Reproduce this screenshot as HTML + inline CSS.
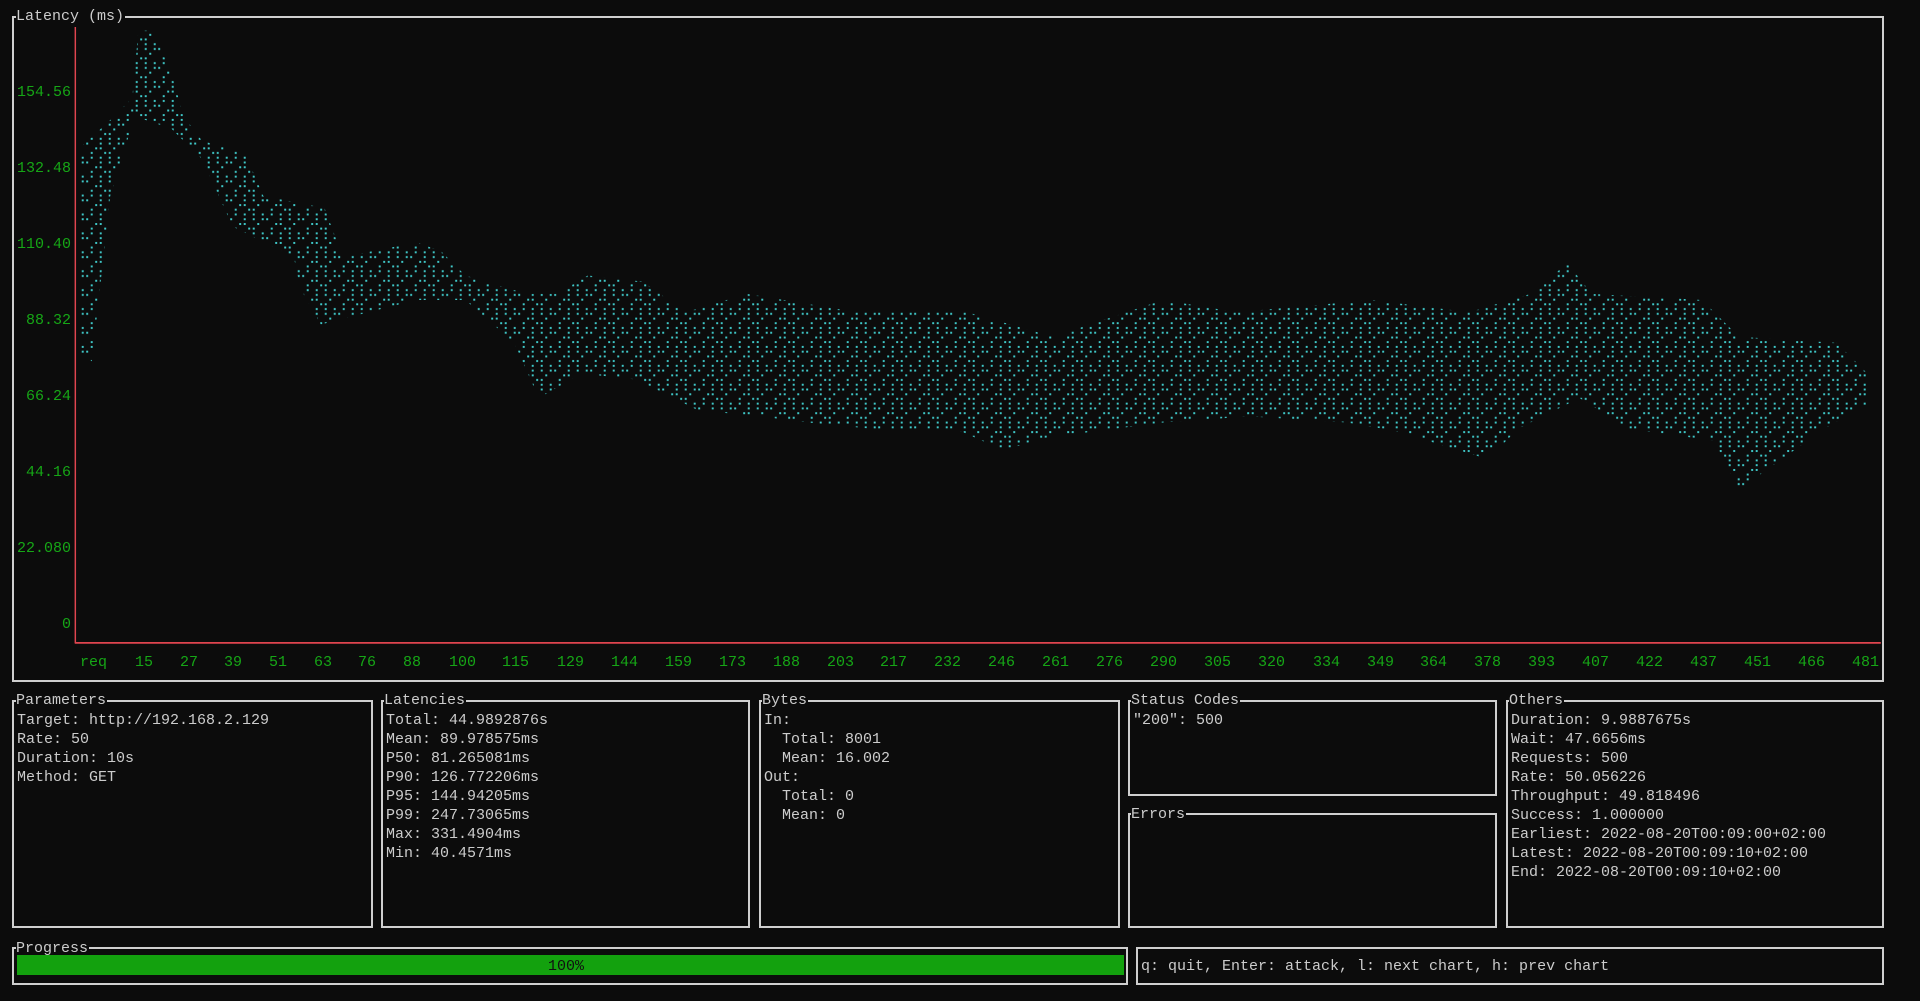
<!DOCTYPE html>
<html><head><meta charset="utf-8">
<style>
html,body{margin:0;padding:0;background:#0c0c0c;width:1920px;height:1001px;overflow:hidden}
body{position:relative;font-family:"Liberation Mono","DejaVu Sans Mono",monospace;font-size:15px;color:#cccccc}
.box{position:absolute;border:2px solid #cfcfcf;box-sizing:border-box}
.t{position:absolute;white-space:pre;line-height:19px;height:19px}
.ttl{background:#0c0c0c;padding:0 1px 0 0}
.g{color:#16a616}
</style></head><body>

<div class="box" style="left:12px;top:16px;width:1872px;height:666px"></div>
<div class="t ttl" style="left:16px;top:7px">Latency (ms)</div>

<svg style="position:absolute;left:0;top:0" width="1920" height="1001" viewBox="0 0 1568 817.5">
<defs>
<pattern id="p" patternUnits="userSpaceOnUse" width="29.4" height="15.45">
<g fill="#3fc9c9">
<rect x="0.6" y="0.5" width="1.6" height="1.6"/>
<rect x="0.6" y="4.4" width="1.6" height="1.6"/>
<rect x="0.6" y="8.3" width="1.6" height="1.6"/>
<rect x="4.3" y="12.2" width="1.6" height="1.6"/>
<rect x="7.95" y="4.4" width="1.6" height="1.6"/>
<rect x="7.95" y="8.3" width="1.6" height="1.6"/>
<rect x="11.6" y="8.3" width="1.6" height="1.6"/>
<rect x="15.3" y="0.5" width="1.6" height="1.6"/>
<rect x="15.3" y="4.4" width="1.6" height="1.6"/>
<rect x="18.95" y="12.2" width="1.6" height="1.6"/>
<rect x="22.65" y="4.4" width="1.6" height="1.6"/>
<rect x="22.65" y="8.3" width="1.6" height="1.6"/>
<rect x="22.65" y="12.2" width="1.6" height="1.6"/>
<rect x="26.3" y="0.5" width="1.6" height="1.6"/>
</g>
</pattern>
</defs>
<line x1="61.5" y1="22" x2="61.5" y2="525" stroke="#e0454f" stroke-width="1.2"/>
<line x1="61" y1="525" x2="1536" y2="525" stroke="#e0454f" stroke-width="1.4"/>
<polygon fill="url(#p)" points="66,120 88,100 108,80 113,25 125,25 140,60 150,95 165,115 200,125 215,160 240,165 265,170 280,210 340,198 360,205 380,225 430,240 455,240 480,225 525,230 560,255 610,240 700,255 790,255 860,275 950,245 1010,255 1120,245 1200,255 1250,240 1280,215 1300,240 1390,245 1420,275 1500,280 1525,305 1525,330 1490,350 1420,400 1400,360 1330,350 1290,325 1240,350 1215,375 1140,352 1100,345 1020,340 950,345 850,358 820,368 780,350 730,352 660,345 620,340 570,335 520,310 475,305 440,325 420,280 380,245 340,245 262,265 245,235 240,210 190,185 165,130 140,105 110,95 90,160 75,295 66,290"/>
</svg>

<div class="t g" style="right:1849px;top:83px">154.56</div>
<div class="t g" style="right:1849px;top:159px">132.48</div>
<div class="t g" style="right:1849px;top:235px">110.40</div>
<div class="t g" style="right:1849px;top:311px">88.32</div>
<div class="t g" style="right:1849px;top:387px">66.24</div>
<div class="t g" style="right:1849px;top:463px">44.16</div>
<div class="t g" style="right:1849px;top:539px">22.080</div>
<div class="t g" style="right:1849px;top:615px">0</div>

<div class="t g" style="left:80px;top:653px">req</div>
<div class="t g" style="left:135px;top:653px">15</div>
<div class="t g" style="left:180px;top:653px">27</div>
<div class="t g" style="left:224px;top:653px">39</div>
<div class="t g" style="left:269px;top:653px">51</div>
<div class="t g" style="left:314px;top:653px">63</div>
<div class="t g" style="left:358px;top:653px">76</div>
<div class="t g" style="left:403px;top:653px">88</div>
<div class="t g" style="left:449px;top:653px">100</div>
<div class="t g" style="left:502px;top:653px">115</div>
<div class="t g" style="left:557px;top:653px">129</div>
<div class="t g" style="left:611px;top:653px">144</div>
<div class="t g" style="left:665px;top:653px">159</div>
<div class="t g" style="left:719px;top:653px">173</div>
<div class="t g" style="left:773px;top:653px">188</div>
<div class="t g" style="left:827px;top:653px">203</div>
<div class="t g" style="left:880px;top:653px">217</div>
<div class="t g" style="left:934px;top:653px">232</div>
<div class="t g" style="left:988px;top:653px">246</div>
<div class="t g" style="left:1042px;top:653px">261</div>
<div class="t g" style="left:1096px;top:653px">276</div>
<div class="t g" style="left:1150px;top:653px">290</div>
<div class="t g" style="left:1204px;top:653px">305</div>
<div class="t g" style="left:1258px;top:653px">320</div>
<div class="t g" style="left:1313px;top:653px">334</div>
<div class="t g" style="left:1367px;top:653px">349</div>
<div class="t g" style="left:1420px;top:653px">364</div>
<div class="t g" style="left:1474px;top:653px">378</div>
<div class="t g" style="left:1528px;top:653px">393</div>
<div class="t g" style="left:1582px;top:653px">407</div>
<div class="t g" style="left:1636px;top:653px">422</div>
<div class="t g" style="left:1690px;top:653px">437</div>
<div class="t g" style="left:1744px;top:653px">451</div>
<div class="t g" style="left:1798px;top:653px">466</div>
<div class="t g" style="left:1852px;top:653px">481</div>

<div class="box" style="left:12px;top:700px;width:361px;height:228px"></div>
<div class="t ttl" style="left:16px;top:691px">Parameters</div>
<div class="t" style="left:17px;top:711px">Target: http://192.168.2.129
Rate: 50
Duration: 10s
Method: GET</div>

<div class="box" style="left:381px;top:700px;width:369px;height:228px"></div>
<div class="t ttl" style="left:384px;top:691px">Latencies</div>
<div class="t" style="left:386px;top:711px">Total: 44.9892876s
Mean: 89.978575ms
P50: 81.265081ms
P90: 126.772206ms
P95: 144.94205ms
P99: 247.73065ms
Max: 331.4904ms
Min: 40.4571ms</div>

<div class="box" style="left:759px;top:700px;width:361px;height:228px"></div>
<div class="t ttl" style="left:762px;top:691px">Bytes</div>
<div class="t" style="left:764px;top:711px">In:
  Total: 8001
  Mean: 16.002
Out:
  Total: 0
  Mean: 0</div>

<div class="box" style="left:1128px;top:700px;width:369px;height:96px"></div>
<div class="t ttl" style="left:1131px;top:691px">Status Codes</div>
<div class="t" style="left:1133px;top:711px">"200": 500</div>

<div class="box" style="left:1128px;top:813px;width:369px;height:115px"></div>
<div class="t ttl" style="left:1131px;top:805px">Errors</div>

<div class="box" style="left:1506px;top:700px;width:378px;height:228px"></div>
<div class="t ttl" style="left:1509px;top:691px">Others</div>
<div class="t" style="left:1511px;top:711px">Duration: 9.9887675s
Wait: 47.6656ms
Requests: 500
Rate: 50.056226
Throughput: 49.818496
Success: 1.000000
Earliest: 2022-08-20T00:09:00+02:00
Latest: 2022-08-20T00:09:10+02:00
End: 2022-08-20T00:09:10+02:00</div>

<div class="box" style="left:12px;top:947px;width:1116px;height:38px"></div>
<div class="t ttl" style="left:16px;top:939px">Progress</div>
<div style="position:absolute;left:17px;top:955px;width:1107px;height:20px;background:#13a10e"></div>
<div class="t" style="left:548px;top:957px;color:#111">100%</div>

<div class="box" style="left:1136px;top:947px;width:748px;height:38px"></div>
<div class="t" style="left:1141px;top:957px">q: quit, Enter: attack, l: next chart, h: prev chart</div>

</body></html>
